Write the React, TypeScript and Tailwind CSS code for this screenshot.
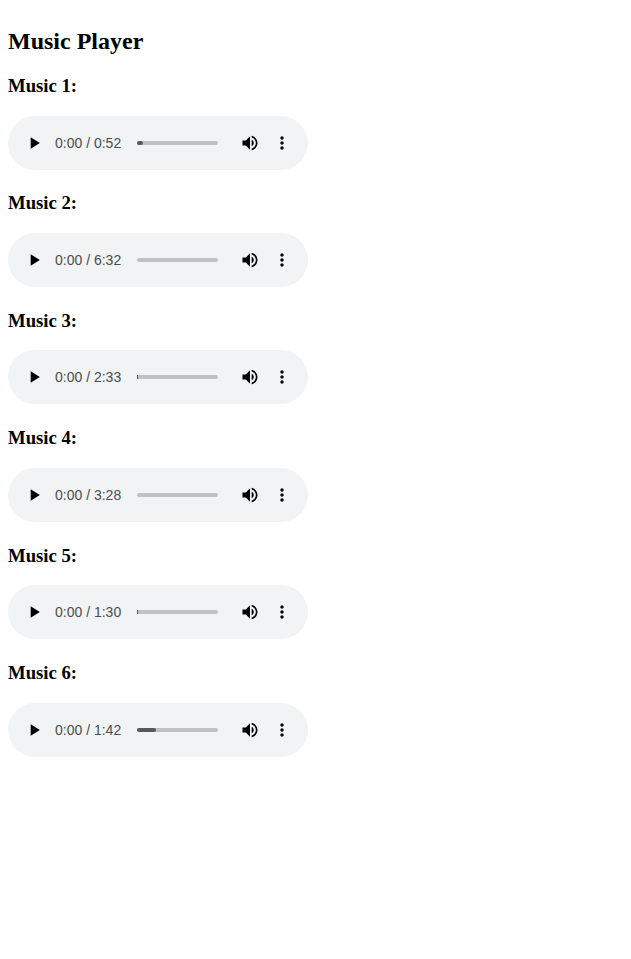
const tracks = [
  { name: "Music 1:", duration: "0:52", loaded: 6 },
  { name: "Music 2:", duration: "6:32", loaded: 0 },
  { name: "Music 3:", duration: "2:33", loaded: 1 },
  { name: "Music 4:", duration: "3:28", loaded: 0 },
  { name: "Music 5:", duration: "1:30", loaded: 1 },
  { name: "Music 6:", duration: "1:42", loaded: 19 },
];

function Player({ duration, loaded }: { duration: string; loaded: number }) {
  return (
    <div className="flex h-[54px] w-[300px] items-center rounded-full bg-[#f1f3f4] pl-4">
      <svg className="size-5 shrink-0" viewBox="0 0 24 24" fill="#000">
        <path d="M8 5v14l11-7z" />
      </svg>
      <span className="ml-[11px] w-[82px] shrink-0 whitespace-nowrap font-['Liberation_Sans',Arial,sans-serif] text-[14px] leading-5 text-[#4c4d4e]">
        0:00 / {duration}
      </span>
      <div className={`h-1 w-[81px] shrink-0 bg-[#c1c1c2] ${loaded === 1 ? "rounded-r-[2px]" : "rounded-[2px]"}`}>
        <div
          className={`h-full bg-[#58585a] ${loaded === 1 ? "" : "rounded-[2px]"}`}
          style={{ width: loaded }}
        />
      </div>
      <svg className="ml-[22px] size-5 shrink-0" viewBox="0 0 24 24" fill="#000">
        <path d="M3 9v6h4l5 5V4L7 9H3zm13.500 3c0-1.770-1.020-3.290-2.500-4.030v8.050c1.480-.73 2.500-2.250 2.500-4.020zM14 3.230v2.060c2.890.86 5 3.540 5 6.710s-2.110 5.850-5 6.710v2.060c4.010-.91 7-4.490 7-8.770s-2.990-7.860-7-8.770z" />
      </svg>
      <svg className="ml-3 size-5 shrink-0" viewBox="0 0 24 24" fill="#000">
        <path d="M12 8c1.100 0 2-.9 2-2s-.9-2-2-2-2 .9-2 2 .9 2 2 2zm0 2c-1.100 0-2 .9-2 2s.9 2 2 2 2-.9 2-2-.9-2-2-2zm0 6c-1.100 0-2 .9-2 2s.9 2 2 2 2-.9 2-2-.9-2-2-2z" />
      </svg>
    </div>
  );
}

export default function App() {
  return (
    <main className="min-h-screen bg-white px-2 pt-7 font-['Liberation_Serif','Times_New_Roman',serif] text-black">
      <h2 className="mb-5 text-[24px] font-bold leading-[27px]">Music Player</h2>
      {tracks.map((t) => (
        <section key={t.name} className="h-[117.4px]">
          <h3 className="mb-[18.6px] text-[18.720px] font-bold leading-[22px]">{t.name}</h3>
          <Player duration={t.duration} loaded={t.loaded} />
        </section>
      ))}
    </main>
  );
}
